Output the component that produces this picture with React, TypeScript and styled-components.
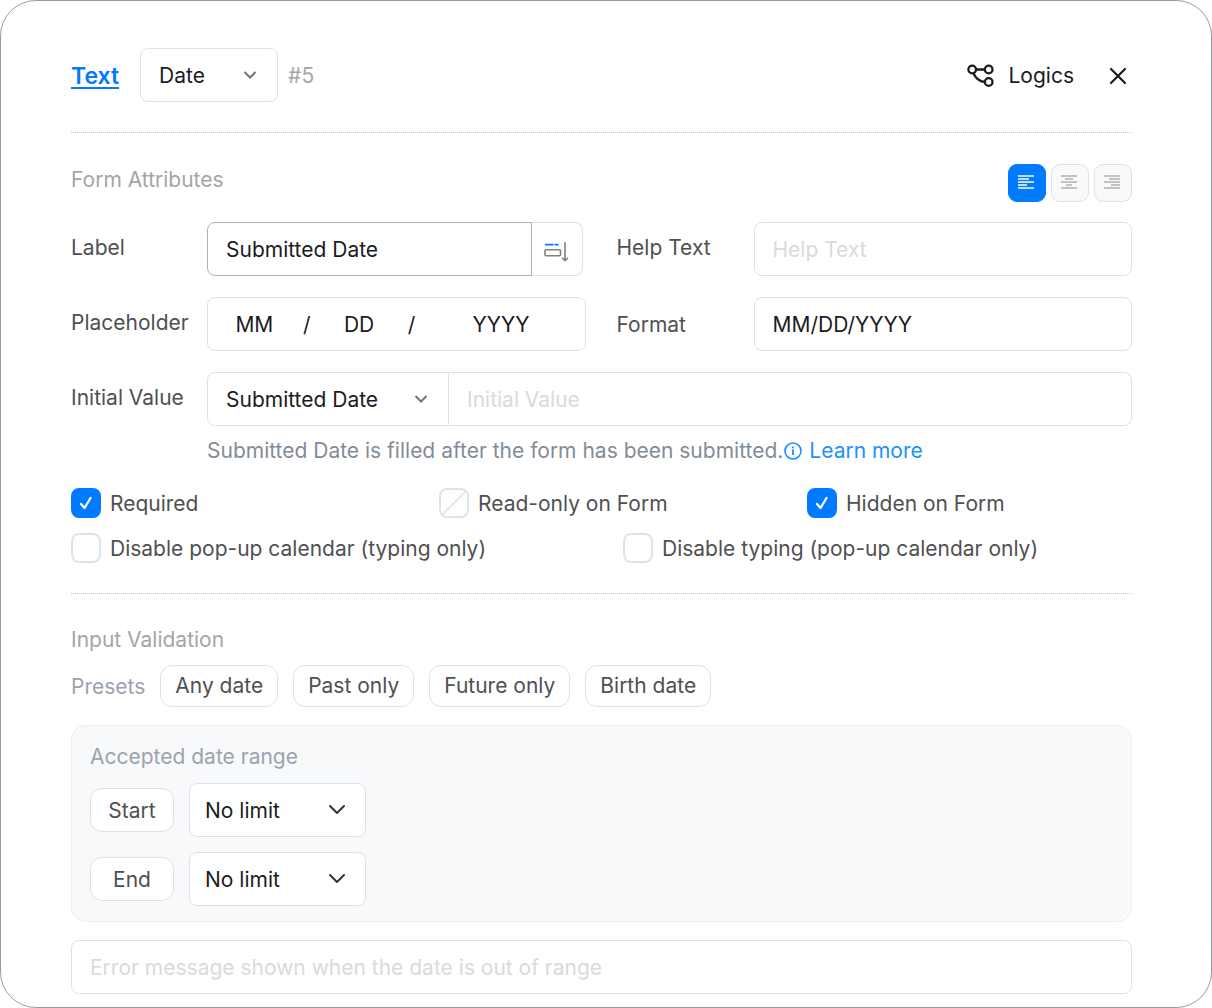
import React, { useState } from "react";
import styled, { createGlobalStyle, css } from "styled-components";

const c = {
  blue: "#007bff",
  link: "#1e90ff",
  ink: "#1b1c1e",
  text: "#505052",
  muted: "#a5a5a8",
  slate: "#9aa3b0",
  hint: "#818c98",
  placeholder: "#d8dade",
  border: "#dde1e9",
  strong: "#acb1b8",
  panel: "#f8f9fb",
};

const GlobalStyle = createGlobalStyle`
  *, *::before, *::after { box-sizing: border-box; }
  body {
    margin: 0;
    background: #fff;
    font-family: Inter, "Liberation Sans", sans-serif;
    font-size: 21px;
    line-height: 32px;
    color: ${c.text};
  }
  button, input, select { font: inherit; color: inherit; margin: 0; }
`;

const Card = styled.main`
  display: flex;
  flex-direction: column;
  min-height: 100vh;
  padding: 47px 79px 13px 70px;
  border: 1px solid #929ba8;
  border-radius: 36px;
  background: #fff;
`;

const Header = styled.header`
  display: flex;
  align-items: center;
  padding-bottom: 30px;
  border-bottom: 1px dotted #c4c4c6;
`;

const TypeLink = styled.a`
  margin-right: 21px;
  padding-top: 2px;
  color: ${c.blue};
  font-size: 23px;
  font-weight: 600;
  text-decoration-thickness: 2px;
  text-underline-offset: 3px;
`;

const Index = styled.span`
  margin-left: 10px;
  padding-top: 2px;
  color: ${c.muted};
`;

const PlainButton = styled.button`
  display: flex;
  align-items: center;
  gap: 13px;
  padding: 2px 0 0;
  border: 0;
  background: none;
  color: ${c.ink};
  cursor: pointer;
`;

const HeaderActions = styled.div`
  display: flex;
  align-items: center;
  gap: 35px;
  margin-left: auto;
  padding-right: 5px;
`;

const Section = styled.section<{ $ruled?: boolean }>`
  display: flex;
  flex-direction: column;
  padding: 31px 0 30px;
  ${(p) => p.$ruled && css`border-bottom: 1px dotted #c4c4c6;`}
  &:last-child { padding: 30px 0 0; }
`;

const SectionHead = styled.div`
  display: flex;
  justify-content: space-between;
  align-items: flex-start;
`;

const SectionTitle = styled.h2`
  margin: 0;
  font-size: 21px;
  font-weight: 400;
  color: ${c.muted};
`;

const AlignGroup = styled.div`
  display: flex;
  gap: 5px;
`;

const AlignButton = styled.button<{ $active: boolean }>`
  display: flex;
  align-items: center;
  justify-content: center;
  width: 38px;
  height: 38px;
  padding: 0 2px 2px 0;
  border: 1px solid ${(p) => (p.$active ? c.blue : c.border)};
  border-radius: 9px;
  background: ${(p) => (p.$active ? c.blue : "#f8f9f9")};
  color: ${(p) => (p.$active ? "#fff" : "#b0b0b0")};
  cursor: pointer;
`;

const Fields = styled.div`
  display: grid;
  grid-template-columns: 136px minmax(0, 1fr) 31px 137px minmax(0, 1fr);
  row-gap: 21px;
  margin-top: 20px;
`;

const FieldLabel = styled.label<{ $second?: boolean; $low?: boolean }>`
  padding-top: ${(p) => (p.$low ? 12 : 10)}px;
  ${(p) => p.$second && css`grid-column: 4;`}
`;

const controlBox = css`
  height: 54px;
  border: 1px solid ${c.border};
  border-radius: 8px;
  background: #fff;
  color: ${c.ink};
`;

const TextInput = styled.input`
  ${controlBox}
  width: 100%;
  min-width: 0;
  padding: 0 18px;
  &::placeholder { color: ${c.placeholder}; opacity: 1; }
`;

const LabelGroup = styled.div`
  display: flex;
  padding-right: 3px;
`;

const LabelInput = styled(TextInput)`
  flex: 1;
  border-color: ${c.strong};
  border-radius: 8px 0 0 8px;
`;

const AddonButton = styled.button`
  ${controlBox}
  display: flex;
  align-items: center;
  justify-content: center;
  width: 51px;
  padding: 6px 0 0;
  border-left: 0;
  border-radius: 0 8px 8px 0;
  cursor: pointer;
`;

const DateParts = styled.div`
  ${controlBox}
  display: grid;
  grid-template-columns: 5fr 12px 5fr 12px 9fr;
  align-items: center;
  padding-top: 2px;
  text-align: center;
`;

const DatePart = styled.input`
  width: 100%;
  min-width: 0;
  padding: 0;
  border: 0;
  background: none;
  text-align: center;
  &::placeholder { color: ${c.ink}; opacity: 1; }
`;

const WideCell = styled.div`
  grid-column: 2 / -1;
`;

const Joined = styled.div`
  display: flex;
  & > input { flex: 1; border-left: 0; border-radius: 0 8px 8px 0; }
`;

const SelectShell = styled.div<{ $width: number; $pad: number }>`
  display: grid;
  flex: none;
  align-items: center;
  width: ${(p) => p.$width}px;
  & > * { grid-area: 1 / 1; }
  & > svg { justify-self: end; margin-right: ${(p) => p.$pad}px; pointer-events: none; }
`;

const NativeSelect = styled.select<{ $joined?: boolean; $inset: number }>`
  ${controlBox}
  width: 100%;
  padding: 2px 40px 0 ${(p) => p.$inset}px;
  appearance: none;
  ${(p) => p.$joined && css`border-radius: 8px 0 0 8px;`}
`;

const Hint = styled.p`
  display: flex;
  align-items: center;
  margin: 9px 0 0;
  color: ${c.hint};
`;

const LearnMore = styled.a`
  display: inline-flex;
  align-items: center;
  gap: 7px;
  margin-left: 1px;
  color: ${c.link};
  text-decoration: none;
`;

const Checks = styled.div<{ $cols: number; $top: number }>`
  display: grid;
  grid-template-columns: repeat(${(p) => p.$cols}, minmax(0, 1fr));
  column-gap: 43px;
  margin-top: ${(p) => p.$top}px;
`;

const CheckLabel = styled.label`
  display: grid;
  grid-template-columns: 30px 1fr;
  column-gap: 9px;
  align-items: center;
  height: 30px;
  line-height: 28px;
  white-space: nowrap;
  & > svg { grid-area: 1 / 1; justify-self: center; pointer-events: none; }
  & > span { padding-top: 2px; }
`;

const CheckBox = styled.input`
  grid-area: 1 / 1;
  width: 30px;
  height: 30px;
  appearance: none;
  border: 2px solid #e0e4ea;
  border-radius: 8px;
  background: #fff;
  &:checked { background: ${c.blue}; border-color: ${c.blue}; }
`;

const Presets = styled.div`
  display: flex;
  align-items: center;
  gap: 15px;
  margin-top: 9px;
  color: ${c.slate};
  & > span { padding-top: 2px; }
`;

const Pill = styled.button`
  height: 42px;
  padding: 0 14px;
  border: 1px solid ${c.border};
  border-radius: 12px;
  background: #fff;
  color: ${c.text};
  cursor: pointer;
`;

const RangePanel = styled.fieldset`
  display: flex;
  flex-direction: column;
  gap: 15px;
  min-width: 0;
  margin: 18px 0;
  padding: 15px 18px;
  border: 1px solid #eceef2;
  border-radius: 15px;
  background: ${c.panel};
`;

const RangeTitle = styled.div`
  margin-bottom: -5px;
  color: ${c.slate};
`;

const RangeRow = styled.div`
  display: flex;
  align-items: center;
  gap: 15px;
`;

const RangeTag = styled.label`
  width: 84px;
  height: 44px;
  border: 1px solid ${c.border};
  border-radius: 12px;
  background: #fff;
  line-height: 44px;
  text-align: center;
`;

const Chevron = ({ large }: { large?: boolean }) =>
  large ? (
    <svg width="18" height="12" viewBox="0 0 18 12" fill="none" stroke="#2f3640" strokeWidth="2" strokeLinecap="round" strokeLinejoin="round">
      <path d="M2 2l7 7 7-7" />
    </svg>
  ) : (
    <svg width="14" height="10" viewBox="0 0 14 10" fill="none" stroke="#747474" strokeWidth="2">
      <path d="M1.5 2L7 7.5 12.5 2" />
    </svg>
  );

const LogicIcon = () => (
  <svg width="28" height="24" viewBox="0 0 28 24" fill="none" stroke={c.ink} strokeWidth="2.3">
    <circle cx="5.2" cy="5.5" r="3.8" />
    <circle cx="21.7" cy="5.5" r="3.8" />
    <circle cx="21.7" cy="18" r="3.8" />
    <path d="M9 5.5h9M6.5 9.2c2 5 5.5 8 11.3 8.8" />
  </svg>
);

const CloseIcon = () => (
  <svg width="18" height="18" viewBox="0 0 18 18" stroke={c.ink} strokeWidth="2.2" strokeLinecap="round">
    <path d="M2 2l14 14M16 2L2 16" />
  </svg>
);

type Align = "left" | "center" | "right";
const alignPaths: Record<Align, string> = {
  left: "M0 1h16M0 4h11M0 7h16M0 10h9M0 13h16",
  center: "M0 1h16M4 4h8M0 7h16M5 10h6M0 13h16",
  right: "M0 1h16M5 4h11M0 7h16M7 10h9M0 13h16",
};

const InsertIcon = () => (
  <svg width="26" height="20" viewBox="0 0 26 20" fill="none" stroke="#808080" strokeWidth="1.6">
    <path d="M1 2.6h8.5M10.5 2.6h4" stroke={c.blue} />
    <rect x="1" y="7.7" width="15.5" height="6" rx="1" />
    <path d="M21 0.3v18.2M18 15.7l3 3 3-3" />
  </svg>
);

const InfoIcon = () => (
  <svg width="18" height="18" viewBox="0 0 18 18" fill="none" stroke={c.link} strokeWidth="1.6">
    <circle cx="9" cy="9" r="8" />
    <path d="M9 7.5V13M9 4.6v1.7" strokeWidth="1.8" />
    <path d="M7.8 8H9" strokeWidth="1" />
  </svg>
);

const Tick = () => (
  <svg width="14" height="14" viewBox="0 0 14 14" fill="none" stroke="#fff" strokeWidth="2.3" strokeLinecap="round" strokeLinejoin="round">
    <path d="M2 8l3.5 4L11.5 2" />
  </svg>
);

const Slash = () => (
  <svg width="30" height="30" viewBox="0 0 30 30" stroke={c.border} strokeWidth="1.5">
    <path d="M3 27L27 3" />
  </svg>
);

function Check({ label, initial = false, locked = false }: { label: string; initial?: boolean; locked?: boolean }) {
  const [on, setOn] = useState(initial);
  return (
    <CheckLabel>
      <CheckBox type="checkbox" checked={on} disabled={locked} onChange={() => setOn(!on)} />
      {on && <Tick />}
      {locked && <Slash />}
      <span>{label}</span>
    </CheckLabel>
  );
}

function RangeLimit({ id, label }: { id: string; label: string }) {
  return (
    <RangeRow>
      <RangeTag htmlFor={id}>{label}</RangeTag>
      <SelectShell $width={177} $pad={20}>
        <NativeSelect id={id} $inset={15}>
          <option>No limit</option>
        </NativeSelect>
        <Chevron large />
      </SelectShell>
    </RangeRow>
  );
}

export default function App() {
  const [align, setAlign] = useState<Align>("left");
  return (
    <>
      <GlobalStyle />
      <Card>
        <Header>
          <TypeLink href="#text">Text</TypeLink>
          <SelectShell $width={138} $pad={21}>
            <NativeSelect aria-label="Field type" $inset={18}>
              <option>Date</option>
            </NativeSelect>
            <Chevron />
          </SelectShell>
          <Index>#5</Index>
          <HeaderActions>
            <PlainButton type="button">
              <LogicIcon />
              Logics
            </PlainButton>
            <PlainButton type="button" aria-label="Close">
              <CloseIcon />
            </PlainButton>
          </HeaderActions>
        </Header>

        <Section $ruled>
          <SectionHead>
            <SectionTitle>Form Attributes</SectionTitle>
            <AlignGroup>
              {(Object.keys(alignPaths) as Align[]).map((a) => (
                <AlignButton key={a} type="button" aria-label={`Align ${a}`} $active={a === align} onClick={() => setAlign(a)}>
                  <svg width="16" height="14" viewBox="0 0 16 14" stroke="currentColor" strokeWidth="1.5">
                    <path d={alignPaths[a]} />
                  </svg>
                </AlignButton>
              ))}
            </AlignGroup>
          </SectionHead>

          <Fields>
            <FieldLabel htmlFor="label">Label</FieldLabel>
            <LabelGroup>
              <LabelInput id="label" defaultValue="Submitted Date" />
              <AddonButton type="button" aria-label="Insert field">
                <InsertIcon />
              </AddonButton>
            </LabelGroup>
            <FieldLabel $second htmlFor="help">Help Text</FieldLabel>
            <TextInput id="help" placeholder="Help Text" />

            <FieldLabel htmlFor="month">Placeholder</FieldLabel>
            <DateParts>
              <DatePart id="month" placeholder="MM" />
              <span>/</span>
              <DatePart aria-label="Day" placeholder="DD" />
              <span>/</span>
              <DatePart aria-label="Year" placeholder="YYYY" />
            </DateParts>
            <FieldLabel $second $low htmlFor="format">Format</FieldLabel>
            <TextInput id="format" defaultValue="MM/DD/YYYY" />

            <FieldLabel htmlFor="initial">Initial Value</FieldLabel>
            <WideCell>
              <Joined>
                <SelectShell $width={242} $pad={21}>
                  <NativeSelect id="initial" $joined $inset={18}>
                    <option>Submitted Date</option>
                  </NativeSelect>
                  <Chevron />
                </SelectShell>
                <TextInput aria-label="Initial value" placeholder="Initial Value" />
              </Joined>
              <Hint>
                Submitted Date is filled after the form has been submitted.
                <LearnMore href="#learn">
                  <InfoIcon />
                  Learn more
                </LearnMore>
              </Hint>
            </WideCell>
          </Fields>

          <Checks $cols={3} $top={21}>
            <Check label="Required" initial />
            <Check label="Read-only on Form" locked />
            <Check label="Hidden on Form" initial />
          </Checks>
          <Checks $cols={2} $top={15}>
            <Check label="Disable pop-up calendar (typing only)" />
            <Check label="Disable typing (pop-up calendar only)" />
          </Checks>
        </Section>

        <Section>
          <SectionTitle>Input Validation</SectionTitle>
          <Presets>
            <span>Presets</span>
            <Pill type="button">Any date</Pill>
            <Pill type="button">Past only</Pill>
            <Pill type="button">Future only</Pill>
            <Pill type="button">Birth date</Pill>
          </Presets>
          <RangePanel aria-label="Accepted date range">
            <RangeTitle>Accepted date range</RangeTitle>
            <RangeLimit id="start" label="Start" />
            <RangeLimit id="end" label="End" />
          </RangePanel>
          <TextInput aria-label="Error message" placeholder="Error message shown when the date is out of range" />
        </Section>
      </Card>
    </>
  );
}
